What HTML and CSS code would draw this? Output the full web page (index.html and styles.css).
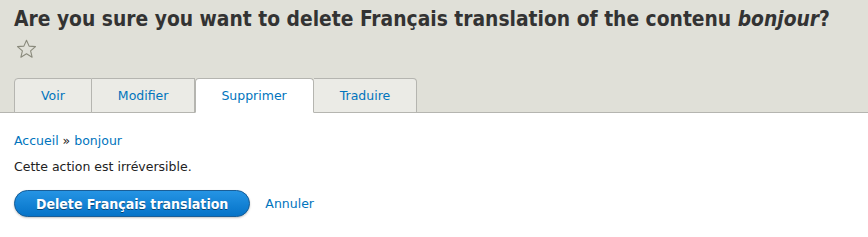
FILE: index.html
```html
<!DOCTYPE html>
<html lang="fr">
<head>
<meta charset="utf-8">
<title>Supprimer la traduction</title>
<link rel="stylesheet" href="styles.css">
</head>
<body>
<header class="header">
  <h1 class="page-title">Are you sure you want to delete Français translation of the contenu <em>bonjour</em>?</h1>
  <a class="shortcut" href="#" aria-label="Ajouter aux raccourcis">
    <svg width="21" height="20" viewBox="0 0 21 20"><path d="M10.5 1.2 L13.1 7.1 L19.5 7.6 L14.6 11.8 L16.1 18.2 L10.5 14.8 L4.9 18.2 L6.4 11.8 L1.5 7.6 L7.9 7.1 Z" fill="none" stroke="#8a8a7c" stroke-width="1.1" stroke-linejoin="round"/></svg>
  </a>
  <nav class="tabs">
    <a class="tab tab-first" href="#">Voir</a>
    <a class="tab" href="#">Modifier</a>
    <a class="tab tab-active" href="#">Supprimer</a>
    <a class="tab tab-last" href="#">Traduire</a>
  </nav>
</header>
<main class="content">
  <div class="breadcrumb"><a href="#">Accueil</a> » <a href="#">bonjour</a></div>
  <p class="message">Cette action est irréversible.</p>
  <div class="actions">
    <button class="button-primary" type="button">Delete Français translation</button>
    <a class="cancel" href="#">Annuler</a>
  </div>
</main>
</body>
</html>
```
FILE: styles.css
```css
html, body {
  margin: 0;
  padding: 0;
  background: #ffffff;
}
body {
  font-family: "DejaVu Sans", "Noto Sans", sans-serif;
  font-size: 12.5px;
  color: #222222;
}
a {
  color: #0074bd;
  text-decoration: none;
}
.header {
  background: #e0e0d8;
  padding: 5px 14px 0;
  border-bottom: 1px solid #b5b5b0;
}
.page-title {
  margin: 0;
  font-family: "DejaVu Sans Condensed", "Open Sans", sans-serif;
  font-size: 20.8px;
  line-height: 29px;
  font-weight: bold;
  color: #333333;
}
.page-title em {
  font-style: italic;
}
.shortcut {
  display: block;
  width: 21px;
  height: 20px;
  margin: 5px 0 0 2px;
}
.shortcut svg {
  display: block;
}
.tabs {
  display: flex;
  margin-top: 19px;
  margin-bottom: -1px;
}
.tab {
  display: block;
  padding: 0 26px;
  height: 33px;
  line-height: 33px;
  font-size: 12.5px;
  background: #ebebe6;
  border: 1px solid #b5b5b0;
  border-left: none;
  color: #0074bd;
}
.tab-first {
  border-left: 1px solid #b5b5b0;
  border-top-left-radius: 4px;
}
.tab-last {
  border-top-right-radius: 4px;
}
.tab-active {
  background: #ffffff;
  border-bottom-color: #ffffff;
  border-left: 1px solid #b5b5b0;
  border-radius: 4px 4px 0 0;
  padding: 0 26px 0 25px;
}
.content {
  padding: 19px 14px;
}
.breadcrumb {
  line-height: 18px;
}
.message {
  margin: 8px 0 0;
  line-height: 18px;
}
.actions {
  display: flex;
  align-items: center;
  gap: 15px;
  margin-top: 14px;
}
.button-primary {
  font-family: "DejaVu Sans Condensed", "Open Sans", sans-serif;
  font-size: 14px;
  font-weight: bold;
  color: #ffffff;
  height: 27px;
  padding: 0 21px;
  border: 1px solid #1a5e97;
  border-radius: 20em;
  background-color: #0a80d6;
  background-image: linear-gradient(to bottom, #2594e4, #0573c8);
  text-shadow: 0 1px rgba(0, 0, 0, 0.45);
  box-shadow: 0 1px 2px rgba(23, 26, 28, 0.25);
  cursor: pointer;
}
.cancel {
  font-size: 12.5px;
}
```
